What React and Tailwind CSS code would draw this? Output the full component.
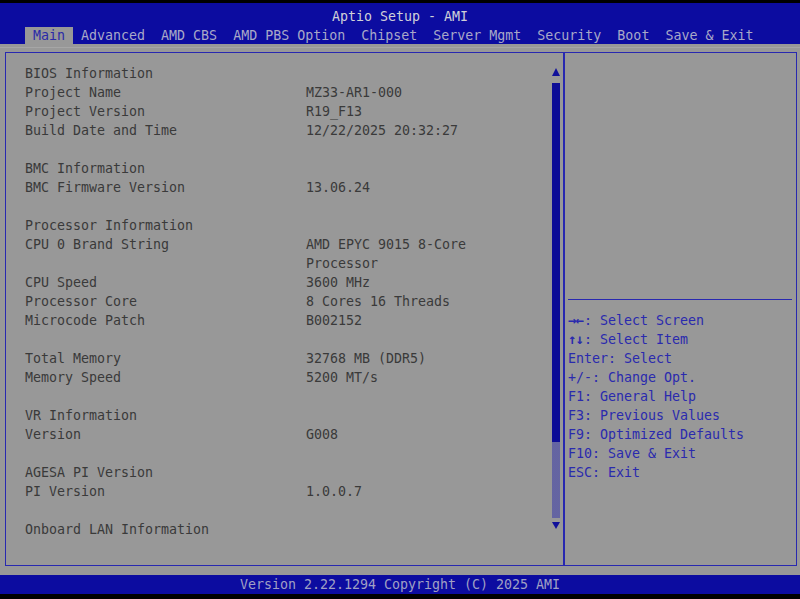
const tabs = ['Main', 'Advanced', 'AMD CBS', 'AMD PBS Option', 'Chipset', 'Server Mgmt', 'Security', 'Boot', 'Save & Exit']

const rows = [
  ['BIOS Information', ''],
  ['Project Name', 'MZ33-AR1-000'],
  ['Project Version', 'R19_F13'],
  ['Build Date and Time', '12/22/2025 20:32:27'],
  ['', ''],
  ['BMC Information', ''],
  ['BMC Firmware Version', '13.06.24'],
  ['', ''],
  ['Processor Information', ''],
  ['CPU 0 Brand String', 'AMD EPYC 9015 8-Core'],
  ['', 'Processor'],
  ['CPU Speed', '3600 MHz'],
  ['Processor Core', '8 Cores 16 Threads'],
  ['Microcode Patch', 'B002152'],
  ['', ''],
  ['Total Memory', '32768 MB (DDR5)'],
  ['Memory Speed', '5200 MT/s'],
  ['', ''],
  ['VR Information', ''],
  ['Version', 'G008'],
  ['', ''],
  ['AGESA PI Version', ''],
  ['PI Version', '1.0.0.7'],
  ['', ''],
  ['Onboard LAN Information', ''],
]

const help = [
  ['→←', ': Select Screen'],
  ['↑↓', ': Select Item'],
  ['', 'Enter: Select'],
  ['', '+/-: Change Opt.'],
  ['', 'F1: General Help'],
  ['', 'F3: Previous Values'],
  ['', 'F9: Optimized Defaults'],
  ['', 'F10: Save & Exit'],
  ['', 'ESC: Exit'],
]

const Scrollbar = () => (
  <div className="flex flex-col items-center w-[8px] mt-[15px] mr-[3px] h-[461px]">
    <div className="w-0 h-0 border-l-[4px] border-r-[4px] border-b-[8px] border-l-transparent border-r-transparent border-b-[#10109a]" />
    <div className="w-[8px] h-[359px] mt-[7px] bg-[#0c0c96]" />
    <div className="w-[8px] h-[76px] bg-[#9494a4] bg-[radial-gradient(#4a4aa0_0.6px,transparent_0.9px)] bg-[length:2px_2px]" />
    <div className="mt-[4px] w-0 h-0 border-l-[4px] border-r-[4px] border-t-[7px] border-l-transparent border-r-transparent border-t-[#10109a]" />
  </div>
)

export default function App() {
  return (
    <div className="w-[800px] h-[599px] bg-black flex flex-col overflow-hidden font-['DejaVu_Sans_Mono','Liberation_Mono',monospace] text-[13.3px]">
      {/* header */}
      <div className="mt-[3px] h-[41px] bg-[#0c0ca0] flex flex-col">
        <div className="mt-[4px] h-[19px] leading-[19px] text-center text-[#d0d0d8]">Aptio Setup - AMI</div>
        <div className="mt-[1px] h-[17px] flex pl-[25px]">
          {tabs.map((t) => (
            <div
              key={t}
              className={`px-[8px] leading-[17px] whitespace-pre ${
                t === 'Main' ? 'bg-[#989898] text-[#2a2aa8]' : 'text-[#a8a8c8]'
              }`}
            >
              {t}
            </div>
          ))}
        </div>
      </div>

      {/* body */}
      <div className="flex-1 bg-[#989898] flex flex-col">
        <div className="h-[1px] mt-[3px] bg-[#a6a6a6]" />
        <div className="mt-[4px] ml-[5px] mr-[3px] h-[514px] border border-[#2828b0] flex">
          {/* left pane */}
          <div className="w-[557px] flex">
            <div className="flex-1 pl-[19px] pt-[11px] text-[#3a3a3a]">
              {rows.map(([l, v], i) => (
                <div key={i} className="flex h-[19px] leading-[19px] whitespace-pre">
                  <div className="w-[281px]">{l}</div>
                  <div>{v}</div>
                </div>
              ))}
            </div>
            <Scrollbar />
          </div>
          <div className="w-[2px] bg-[#2828b0]" />
          {/* right pane */}
          <div className="flex-1 flex flex-col">
            <div className="h-[246px]" />
            <div className="h-[1px] ml-[3px] mr-[4px] bg-[#2828b0]" />
            <div className="pt-[11px] pl-[3px] text-[#2a2aae]">
              {help.map(([a, t], i) => (
                <div key={i} className="flex h-[19px] leading-[19px] whitespace-pre">
                  {a && (
                    <span className="w-[16px] overflow-hidden font-bold text-[14px] tracking-[-1px] leading-[19px]">
                      {a}
                    </span>
                  )}
                  <span>{t}</span>
                </div>
              ))}
            </div>
          </div>
        </div>
      </div>

      {/* footer */}
      <div className="h-[19px] bg-[#0c0ca0] leading-[20px] text-center text-[#a0a0c4]">
        Version 2.22.1294 Copyright (C) 2025 AMI
      </div>
      <div className="h-[5px] bg-black" />
    </div>
  )
}
